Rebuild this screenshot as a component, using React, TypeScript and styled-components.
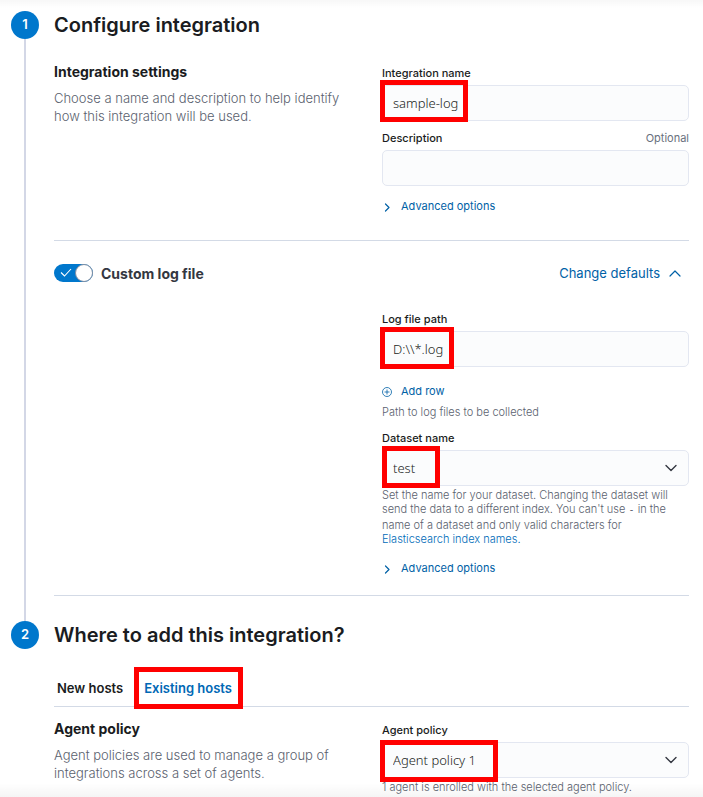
import React, { useState } from "react";
import styled, { createGlobalStyle, css } from "styled-components";

const GlobalStyle = createGlobalStyle`
  *, *::before, *::after { box-sizing: border-box; }
  body { margin: 0; background: #fff; }
  button, input, select { font: inherit; margin: 0; }
`;

const uiFont = `Inter, "Liberation Sans", sans-serif`;
const fieldFont = `"Noto Sans", "Open Sans", sans-serif`;
const codeFont = `"DejaVu Sans Mono", "Liberation Mono", monospace`;
const link = "#0061a6";
const rule = "#d3dae6";

const Page = styled.main`
  position: relative;
  min-height: 100vh;
  padding: 11px 14px 3px 11px;
  font-family: ${uiFont};
  color: #343741;

  &::before,
  &::after {
    content: "";
    position: absolute;
    left: 0;
    right: 0;
    pointer-events: none;
  }
  &::before {
    top: 0;
    height: 8px;
    background: linear-gradient(rgba(0, 0, 0, 0.03), rgba(0, 0, 0, 0));
  }
  &::after {
    bottom: 0;
    height: 14px;
    background: linear-gradient(rgba(0, 0, 0, 0), rgba(0, 0, 0, 0.04));
  }
`;

const Step = styled.section`
  display: grid;
  grid-template-columns: 28px minmax(0, 1fr);
  column-gap: 15px;
`;

const StepRail = styled.div`
  display: flex;
  flex-direction: column;
  align-items: center;
`;

const StepNumber = styled.span`
  flex: none;
  width: 28px;
  height: 28px;
  border-radius: 50%;
  background: #0077cc;
  color: #fff;
  font-size: 13px;
  font-weight: 600;
  line-height: 27px;
  text-align: center;
`;

const StepLine = styled.span`
  flex: 1;
  width: 2px;
  background: #d3d7e6;
`;

const StepBody = styled.div<{ $gap?: number }>`
  padding-bottom: ${(p) => p.$gap ?? 0}px;
`;

const StepTitle = styled.h2`
  margin: 0;
  font-size: 20px;
  font-weight: 600;
  line-height: 28px;
  color: #1a1c21;
`;

const Columns = styled.div<{ $top: number }>`
  display: grid;
  grid-template-columns: repeat(2, minmax(0, 1fr));
  column-gap: 21px;
  margin-top: ${(p) => p.$top}px;
`;

const SubTitle = styled.h3`
  margin: 0;
  font-size: 14px;
  font-weight: 700;
  line-height: 20px;
  color: #1a1c21;
`;

const Intro = styled.p`
  margin: 7px 0 0;
  font-size: 13px;
  font-weight: 300;
  line-height: 18px;
  color: #5a616e;
`;

const Form = styled.div`
  grid-column: 2;
  padding-top: 3px;
`;

const Field = styled.div<{ $top?: number }>`
  margin-top: ${(p) => p.$top ?? 0}px;
`;

const LabelRow = styled.div`
  display: flex;
  justify-content: space-between;
  margin-bottom: 4px;
  font-size: 11px;
  line-height: 16px;
`;

const Label = styled.label`
  font-weight: 500;
  color: #1a1c21;
`;

const Optional = styled.span`
  color: #69707d;
`;

const ControlWrap = styled.div`
  position: relative;
  display: flex;
`;

const control = css`
  width: 100%;
  height: 36px;
  padding: 0 10px;
  border: 1px solid #e3e7f1;
  border-radius: 5px;
  background: #fbfcfd;
  font-family: ${fieldFont};
  font-size: 13px;
  font-weight: 300;
  color: #1a1c21;
`;

const TextInput = styled.input`
  ${control}
`;

const Select = styled.select`
  ${control}
  appearance: none;
`;

const SelectArrow = styled.svg`
  position: absolute;
  top: 10px;
  right: 10px;
  pointer-events: none;
`;

const Highlight = styled.span<{ $left: number; $top: number; $width: number }>`
  position: absolute;
  left: ${(p) => p.$left}px;
  top: ${(p) => p.$top}px;
  width: ${(p) => p.$width}px;
  height: 42px;
  border: 5px solid #ff0000;
  pointer-events: none;
`;

const TextButton = styled.button<{ $top: number }>`
  display: flex;
  align-items: center;
  gap: 8px;
  margin-top: ${(p) => p.$top}px;
  padding: 0;
  border: 0;
  background: none;
  font-size: 11px;
  font-weight: 400;
  line-height: 16px;
  color: ${link};
  cursor: pointer;
`;

const Help = styled.p<{ $top?: number }>`
  margin: ${(p) => p.$top ?? 2}px 0 0;
  font-size: 11px;
  font-weight: 300;
  line-height: 14px;
  color: #5a616e;

  code {
    font-family: ${codeFont};
    font-size: 10px;
    line-height: 16px;
  }
  a {
    color: #006bb8;
    text-decoration: none;
  }
`;

const Divider = styled.hr<{ $top: number }>`
  height: 1px;
  margin: ${(p) => p.$top}px 0 0;
  border: 0;
  background: ${rule};
`;

const InputHeader = styled.div`
  display: flex;
  align-items: center;
  justify-content: space-between;
  margin-top: 20px;
`;

const SwitchLabel = styled.label`
  display: flex;
  align-items: center;
  gap: 8px;
  font-size: 14px;
  font-weight: 700;
  line-height: 22px;
  cursor: pointer;
`;

const SwitchTrack = styled.span`
  position: relative;
  display: flex;
  width: 39px;
  height: 18px;

  svg {
    position: absolute;
    left: 6px;
    top: 4px;
    pointer-events: none;
  }
`;

const SwitchInput = styled.input`
  appearance: none;
  width: 100%;
  height: 100%;
  border-radius: 9px;
  background: #98a2b3;
  cursor: pointer;

  &:checked {
    background: #0077cc;
  }
  &::after {
    content: "";
    position: absolute;
    top: 0;
    left: 0;
    width: 18px;
    height: 18px;
    border: 1px solid #7f8ea3;
    border-radius: 50%;
    background: #fff;
  }
  &:checked::after {
    left: 21px;
  }
`;

const SwitchText = styled.span`
  padding-top: 2px;
`;

const DefaultsButton = styled.button`
  display: flex;
  align-items: center;
  gap: 8px;
  padding: 0 7px 0 0;
  border: 0;
  background: none;
  font-size: 13px;
  font-weight: 400;
  line-height: 18px;
  color: ${link};
  cursor: pointer;
`;

const Tabs = styled.div`
  display: flex;
  gap: 21px;
  height: 38px;
  margin-top: 20px;
  padding-left: 3px;
  border-bottom: 1px solid ${rule};
`;

const Tab = styled.button`
  position: relative;
  padding: 0;
  border: 0;
  background: none;
  font-size: 13px;
  font-weight: 600;
  line-height: 18px;
  color: #1a1c21;
  cursor: pointer;

  &[aria-selected="true"] {
    color: #0068b5;
  }
`;

type ChevronProps = { points: string; width: number; height: number };

const Chevron = ({ points, width, height }: ChevronProps) => (
  <svg width={width} height={height} viewBox={`0 0 ${width} ${height}`} fill="none" aria-hidden="true">
    <polyline points={points} stroke="currentColor" strokeWidth="1.2" strokeLinecap="round" strokeLinejoin="round" />
  </svg>
);

const DownArrow = () => (
  <SelectArrow width="16" height="16" viewBox="0 0 16 16" fill="none" aria-hidden="true">
    <polyline points="3,5.5 8,10.5 13,5.5" stroke="#343741" strokeWidth="1.4" strokeLinecap="round" strokeLinejoin="round" />
  </SelectArrow>
);

const PlusCircle = () => (
  <svg width="11" height="11" viewBox="0 0 11 11" fill="none" stroke="currentColor" strokeWidth="0.8" aria-hidden="true">
    <circle cx="5" cy="6" r="4.5" />
    <path d="M5 3.5v5M2.5 6h5" />
  </svg>
);

const AdvancedOptions = ({ top }: { top: number }) => (
  <TextButton type="button" $top={top}>
    <Chevron points="3.5,3 7,6.5 3.5,10" width={11} height={11} />
    Advanced options
  </TextButton>
);

export default function App() {
  const [name, setName] = useState("sample-log");
  const [description, setDescription] = useState("");
  const [path, setPath] = useState("D:\\\\*.log");
  const [enabled, setEnabled] = useState(true);
  const [tab, setTab] = useState("existing");

  return (
    <>
      <GlobalStyle />
      <Page>
        <Step>
          <StepRail>
            <StepNumber>1</StepNumber>
            <StepLine />
          </StepRail>
          <StepBody $gap={25}>
            <StepTitle>Configure integration</StepTitle>
            <Columns $top={23}>
              <div>
                <SubTitle>Integration settings</SubTitle>
                <Intro>Choose a name and description to help identify how this integration will be used.</Intro>
              </div>
              <Form>
                <Field>
                  <LabelRow>
                    <Label htmlFor="name">Integration name</Label>
                  </LabelRow>
                  <ControlWrap>
                    <TextInput id="name" value={name} onChange={(e) => setName(e.target.value)} />
                    <Highlight $left={-2} $top={-5} $width={88} />
                  </ControlWrap>
                </Field>
                <Field $top={9}>
                  <LabelRow>
                    <Label htmlFor="description">Description</Label>
                    <Optional>Optional</Optional>
                  </LabelRow>
                  <ControlWrap>
                    <TextInput id="description" value={description} onChange={(e) => setDescription(e.target.value)} />
                  </ControlWrap>
                </Field>
                <AdvancedOptions top={12} />
              </Form>
            </Columns>
            <Divider $top={26} />
            <InputHeader>
              <SwitchLabel>
                <SwitchTrack>
                  <SwitchInput
                    type="checkbox"
                    role="switch"
                    checked={enabled}
                    onChange={(e) => setEnabled(e.target.checked)}
                  />
                  <svg width="12" height="10" viewBox="0 0 12 10" fill="none" aria-hidden="true">
                    <polyline points="1,4.5 4.5,8 11,1" stroke="#fff" strokeWidth="1.1" />
                  </svg>
                </SwitchTrack>
                <SwitchText>Custom log file</SwitchText>
              </SwitchLabel>
              <DefaultsButton type="button" aria-expanded="true">
                Change defaults
                <Chevron points="2,9 7,4 12,9" width={14} height={12} />
              </DefaultsButton>
            </InputHeader>
            <Columns $top={23}>
              <Form>
                <Field>
                  <LabelRow>
                    <Label htmlFor="path">Log file path</Label>
                  </LabelRow>
                  <ControlWrap>
                    <TextInput id="path" value={path} onChange={(e) => setPath(e.target.value)} />
                    <Highlight $left={-2} $top={-4} $width={74} />
                  </ControlWrap>
                  <TextButton type="button" $top={16}>
                    <PlusCircle />
                    Add row
                  </TextButton>
                  <Help $top={6}>Path to log files to be collected</Help>
                </Field>
                <Field $top={11}>
                  <LabelRow>
                    <Label htmlFor="dataset">Dataset name</Label>
                  </LabelRow>
                  <ControlWrap>
                    <Select id="dataset" defaultValue="test">
                      <option>test</option>
                    </Select>
                    <DownArrow />
                    <Highlight $left={0} $top={-4} $width={58} />
                  </ControlWrap>
                  <Help>
                    Set the name for your dataset. Changing the dataset will send the data to a different index. You
                    can't use <code>-</code> in the name of a dataset and only valid characters for{" "}
                    <a href="#index-names">Elasticsearch index names.</a>
                  </Help>
                </Field>
                <AdvancedOptions top={14} />
              </Form>
            </Columns>
            <Divider $top={19} />
          </StepBody>
        </Step>
        <Step>
          <StepRail>
            <StepNumber>2</StepNumber>
          </StepRail>
          <StepBody>
            <StepTitle>Where to add this integration?</StepTitle>
            <Tabs role="tablist">
              <Tab type="button" role="tab" aria-selected={tab === "new"} onClick={() => setTab("new")}>
                New hosts
              </Tab>
              <Tab type="button" role="tab" aria-selected={tab === "existing"} onClick={() => setTab("existing")}>
                Existing hosts
                <Highlight $left={-10} $top={-2} $width={109} />
              </Tab>
            </Tabs>
            <Columns $top={12}>
              <div>
                <SubTitle>Agent policy</SubTitle>
                <Intro>Agent policies are used to manage a group of integrations across a set of agents.</Intro>
              </div>
              <Form>
                <Field>
                  <LabelRow>
                    <Label htmlFor="policy">Agent policy</Label>
                  </LabelRow>
                  <ControlWrap>
                    <Select id="policy" defaultValue="Agent policy 1">
                      <option>Agent policy 1</option>
                    </Select>
                    <DownArrow />
                    <Highlight $left={-2} $top={-2} $width={118} />
                  </ControlWrap>
                  <Help>1 agent is enrolled with the selected agent policy.</Help>
                </Field>
              </Form>
            </Columns>
          </StepBody>
        </Step>
      </Page>
    </>
  );
}
